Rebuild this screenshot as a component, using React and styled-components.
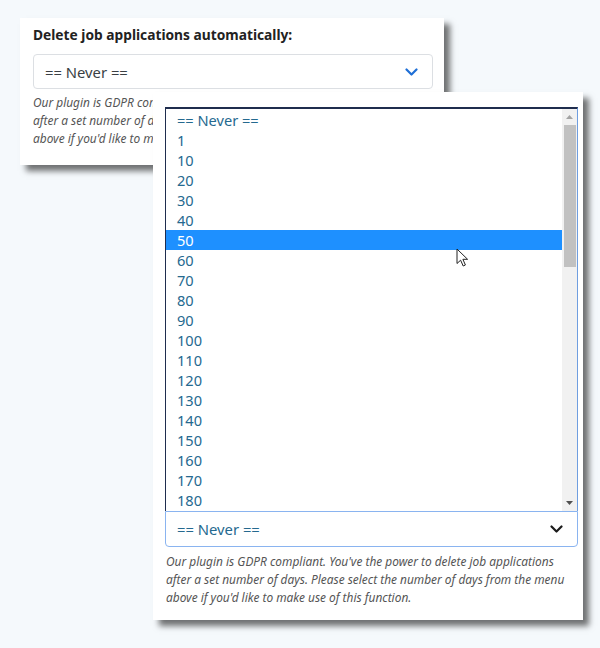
import React from "react"
import styled, { createGlobalStyle } from "styled-components"

const GlobalStyle = createGlobalStyle`
  html, body {
    margin: 0;
    padding: 0;
    background: #f5f9fc;
  }
  body {
    font-family: "Noto Sans", "Open Sans", sans-serif;
  }
`

const Stage = styled.div`
  display: grid;
  width: 600px;
  height: 648px;
  overflow: hidden;
  position: relative;
`

const Card = styled.div`
  grid-area: 1 / 1;
  align-self: start;
  justify-self: start;
  background: #fff;
  box-sizing: border-box;
  box-shadow: 6px 6px 6px rgba(0, 0, 0, 0.55);
  margin: ${props => (props.front ? "92px 0 0 153px" : "18px 0 0 20px")};
  width: ${props => (props.front ? "430px" : "424px")};
  padding: ${props => (props.front ? "15px 5px 14px 12px" : "7px 11px 18px 13px")};
`

const Title = styled.div`
  font-size: 13.75px;
  font-weight: 700;
  line-height: 20px;
  color: #222;
  margin-bottom: 9px;
`

const SelectBox = styled.div`
  display: flex;
  align-items: center;
  justify-content: space-between;
  box-sizing: border-box;
  height: ${props => (props.open ? "36px" : "35px")};
  padding: 0 14px 0 11px;
  border: 1px solid ${props => (props.open ? "#8ab4f0" : "#dcdfe3")};
  border-radius: ${props => (props.open ? "0 0 4px 4px" : "4px")};
  font-size: 14.8px;
  color: ${props => (props.open ? "#25698f" : "#3a3f44")};
  background: #fff;
`

const Helper = styled.p`
  margin: ${props => (props.front ? "5px 0 0 1px" : "4px 0 0 0")};
  font-size: 11.9px;
  font-style: italic;
  line-height: 18px;
  color: #555;
  white-space: nowrap;
  overflow: hidden;
`

const ListBox = styled.div`
  display: flex;
  height: 404px;
  box-sizing: border-box;
  border-top: 2px solid #1f2d4e;
  border-left: 1.5px solid #1f2d4e;
  border-right: 1px solid #6f9ee0;
  background: #fff;
`

const Options = styled.div`
  flex: 1;
  display: flex;
  flex-direction: column;
  padding-top: 1px;
`

const Option = styled.div`
  height: 20px;
  line-height: 20px;
  padding-left: 11px;
  font-size: 14.6px;
  color: ${props => (props.selected ? "#fff" : "#25698f")};
  background: ${props => (props.selected ? "#1e90ff" : "transparent")};
`

const Scrollbar = styled.div`
  width: 15px;
  display: flex;
  flex-direction: column;
  align-items: center;
  background: #f1f1f1;
`

const ScrollArrow = styled.div`
  height: 16px;
  display: flex;
  align-items: center;
  justify-content: center;
`

const Thumb = styled.div`
  width: 12px;
  height: 142px;
  background: #c1c1c1;
`

const Track = styled.div`
  flex: 1;
`

const Cursor = styled.svg`
  position: absolute;
  left: 456px;
  top: 248px;
`

const Chevron = ({ color }) => (
  <svg width="13" height="8" viewBox="0 0 13 8">
    <path d="M1.5 1.5 L6.5 6.5 L11.5 1.5" fill="none" stroke={color} strokeWidth="2.2" strokeLinecap="round" strokeLinejoin="round" />
  </svg>
)

const options = ["== Never ==", "1", "10", "20", "30", "40", "50", "60", "70", "80", "90", "100", "110", "120", "130", "140", "150", "160", "170", "180"]

export default function App() {
  return (
    <Stage>
      <GlobalStyle />
      <Card>
        <Title>Delete job applications automatically:</Title>
        <SelectBox>
          <span>== Never ==</span>
          <Chevron color="#1f6fd6" />
        </SelectBox>
        <Helper>
          Our plugin is GDPR compliant. You've the power to delete job applications
          <br />
          after a set number of days. Please select the number of days from the menu
          <br />
          above if you'd like to make use of this function.
        </Helper>
      </Card>
      <Card front>
        <ListBox>
          <Options>
            {options.map(o => (
              <Option key={o} selected={o === "50"}>{o}</Option>
            ))}
          </Options>
          <Scrollbar>
            <ScrollArrow>
              <svg width="7" height="4" viewBox="0 0 7 4"><path d="M0 4 L3.5 0 L7 4 Z" fill="#a3a3a3" /></svg>
            </ScrollArrow>
            <Thumb />
            <Track />
            <ScrollArrow>
              <svg width="7" height="4" viewBox="0 0 7 4"><path d="M0 0 L3.5 4 L7 0 Z" fill="#505050" /></svg>
            </ScrollArrow>
          </Scrollbar>
        </ListBox>
        <SelectBox open>
          <span>== Never ==</span>
          <Chevron color="#1b1b1b" />
        </SelectBox>
        <Helper front>
          Our plugin is GDPR compliant. You've the power to delete job applications
          <br />
          after a set number of days. Please select the number of days from the menu
          <br />
          above if you'd like to make use of this function.
        </Helper>
      </Card>
      <Cursor width="13" height="20" viewBox="0 0 13 20">
        <path d="M1 1 L1 15.5 L4.6 12.2 L7.2 18 L9.4 17 L6.9 11.3 L11.6 11.3 Z" fill="#fff" stroke="#222" strokeWidth="1" strokeLinejoin="round" />
      </Cursor>
    </Stage>
  )
}
